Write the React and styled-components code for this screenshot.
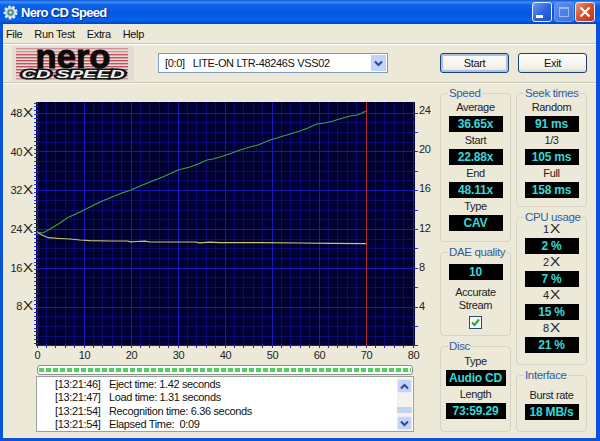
import React from 'react';
import styled, { createGlobalStyle } from 'styled-components';

const GlobalStyle = createGlobalStyle`
    html, body { margin: 0; padding: 0; background: #0054e3; }
    body { font-family: "Liberation Sans", Arial, sans-serif; font-size: 11px; letter-spacing: -.35px; color: #111; }
`;

const Window = styled.div`
    width: 600px;
    height: 441px;
    overflow: hidden;
    display: flex;
    flex-direction: column;
    background: #0a53d8;
`;

const TitleBar = styled.div`
    height: 24px;
    flex: none;
    display: flex;
    align-items: center;
    padding: 0 5px 0 3px;
    background: linear-gradient(#0a58d8 0, #3d8cf5 2px, #0d62e8 5px, #0057e4 14px, #0a63ee 20px, #0045c4 24px);
`;

const AppIcon = styled.svg`
    width: 15px;
    height: 15px;
    flex: none;
`;

const TitleText = styled.div`
    flex: 1;
    margin-left: 3px;
    font: bold 13px "Liberation Sans", sans-serif;
    letter-spacing: -.7px;
    color: #fff;
    text-shadow: 1px 1px 1px #0a2a8a;
`;

const CaptionButton = styled.div`
    width: 20px;
    height: 20px;
    margin-left: 1.5px;
    box-sizing: border-box;
    border: 1px solid ${props => props.$faded ? '#6d95e8' : '#e8eeff'};
    border-radius: 3px;
    display: flex;
    align-items: center;
    justify-content: center;
    background: ${props => props.$close
        ? 'linear-gradient(135deg, #ec9a7c, #d9512b 45%, #c23a14)'
        : props.$faded
            ? 'linear-gradient(135deg, #5f8ff0, #3a6fe0)'
            : 'linear-gradient(135deg, #6f9cf5, #2a62e0 55%, #1f50c8)'};
`;

const MinBar = styled.div`
    width: 7px;
    height: 3px;
    margin: 9px 6px 0 0;
    background: #fff;
`;

const MaxBox = styled.div`
    width: 10px;
    height: 10px;
    box-sizing: border-box;
    border: 1px solid #9ab8f2;
    border-top-width: 2px;
`;

const Content = styled.div`
    flex: 1;
    margin: 0 4px 3px 3px;
    background: #ece9d8;
    display: flex;
    flex-direction: column;
    min-height: 0;
`;

const MenuBar = styled.div`
    height: 19px;
    flex: none;
    display: flex;
    gap: 12px;
    align-items: center;
    padding-left: 3px;
    border-bottom: 1px solid #c9c6b6;
    box-shadow: 0 1px 0 #fff;
`;

const Toolbar = styled.div`
    height: 38px;
    flex: none;
    display: flex;
    align-items: center;
    border-bottom: 1px solid #c9c6b6;
    box-shadow: 0 1px 0 #fbfaf4;
`;

const LogoFrame = styled.svg`
    width: 122px;
    height: 35px;
    margin-left: 9px;
    flex: none;
    letter-spacing: 0;
    font-family: "Liberation Sans", sans-serif;
`;

const Combo = styled.div`
    width: 230px;
    height: 20px;
    margin-left: 24px;
    box-sizing: border-box;
    border: 1px solid #7f9db9;
    background: #fff;
    display: flex;
    align-items: center;
    padding-left: 6px;
    white-space: pre;
`;

const ComboText = styled.div`
    flex: 1;
`;

const ComboArrow = styled.div`
    width: 15px;
    height: 16px;
    margin-right: 1px;
    display: flex;
    align-items: center;
    justify-content: center;
    background: #c3d3f8;
`;

const Button = styled.div`
    width: 69px;
    height: 20px;
    box-sizing: border-box;
    margin-left: ${props => props.$gap}px;
    border: 1px solid #1f3f6f;
    border-radius: 3px;
    display: flex;
    align-items: center;
    justify-content: center;
    background: linear-gradient(#fdfdfa, #f2f0e6 80%, #dcd8c8);
    box-shadow: ${props => props.$primary ? 'inset 0 0 0 2px #a9c0ea' : 'none'};
`;

const Body = styled.div`
    flex: 1;
    display: flex;
    min-height: 0;
`;

const LeftColumn = styled.div`
    width: 437px;
    flex: none;
    padding-top: 18px;
`;

const ChartRow = styled.div`
    display: flex;
    height: 247px;
`;

const AxisLeft = styled.div`
    width: 30px;
    flex: none;
    padding-top: 5px;
    text-align: right;
    color: #222;
`;

const AxisRight = styled.div`
    flex: 1;
    padding: 2px 0 0 1px;
    color: #222;
`;

const AxisRow = styled.div`
    height: ${props => props.$pitch}px;
    line-height: 14px;
`;

const Times = styled.span`
    display: inline-block;
    width: 10px;
    margin-left: 1px;
    text-align: center;
    font: 400 13px/13px "Open Sans", sans-serif;
    transform: scaleX(1.3);
`;

const AxisBottom = styled.div`
    display: flex;
    margin-left: 11px;
    height: 15px;
    line-height: 15px;
    color: #222;
`;

const AxisTick = styled.div`
    width: 47px;
    text-align: center;
`;

const Progress = styled.div`
    width: 376px;
    height: 10px;
    margin: 2px 0 1px 34px;
    box-sizing: border-box;
    border: 1px solid #8a8f86;
    border-radius: 3px;
    background: #fff;
    padding: 2px 1px;
    overflow: hidden;
`;

const Chunks = styled.div`
    height: 100%;
    background: repeating-linear-gradient(90deg, #4fd35f 0, #4fd35f 5px, #fff 5px, #fff 7px);
`;

const LogBox = styled.div`
    width: 378px;
    height: 56px;
    margin-left: 33px;
    box-sizing: border-box;
    border: 1px solid #9a9f98;
    background: #fff;
    display: flex;
`;

const LogLines = styled.div`
    flex: 1;
    padding: 1px 0 0 18px;
`;

const LogLine = styled.div`
    display: flex;
    height: 13.4px;
    line-height: 13.4px;
    white-space: pre;
`;

const LogTime = styled.span`
    width: 54px;
    flex: none;
`;

const ScrollBar = styled.div`
    width: 15px;
    margin-right: 1px;
    padding: 2px 0 1px;
    flex: none;
    display: flex;
    flex-direction: column;
    background: #f4f2ea;
`;

const ScrollButton = styled.div`
    height: 14px;
    box-sizing: border-box;
    border: 1px solid #e4ecfd;
    border-radius: 2px;
    background: #c3d3f8;
    display: flex;
    align-items: center;
    justify-content: center;
`;

const ScrollTrack = styled.div`
    flex: 1;
    display: flex;
    flex-direction: column;
    justify-content: flex-end;
    padding-bottom: 3px;
`;

const ScrollThumb = styled.div`
    height: 6px;
    background: #c3d3f8;
`;

const SidePanel = styled.div`
    display: flex;
    gap: 5px;
    padding-top: 10px;
`;

const SideColumn = styled.div`
    width: 71px;
    display: flex;
    flex-direction: column;
    gap: 10px;
`;

const Group = styled.div`
    position: relative;
    height: ${props => props.$height}px;
    box-sizing: border-box;
    padding-top: ${props => props.$pad || 5}px;
    border: 1px solid #d6d3c2;
    border-radius: 4px;
    display: flex;
    flex-direction: column;
    align-items: center;
`;

const Legend = styled.div`
    position: absolute;
    top: -6px;
    left: 7px;
    padding: 0 1px;
    font-size: 11.5px;
    line-height: 11px;
    background: #ece9d8;
    color: #2f5ba6;
    white-space: nowrap;
`;

const StatLabel = styled.div`
    height: 17px;
    line-height: 17px;
    text-align: center;
    color: #222;
`;

const StatValue = styled.div`
    width: ${props => props.$wide ? 60 : 54}px;
    height: 16px;
    background: #000;
    color: #35d8d8;
    font: bold 12px/16px "Liberation Sans", sans-serif;
    letter-spacing: -.2px;
    text-align: center;
    white-space: nowrap;
`;

const StreamLabel = styled.div`
    margin-top: 6px;
    line-height: 12.5px;
    text-align: center;
    color: #222;
`;

const Check = styled.div`
    width: 13px;
    height: 13px;
    margin-top: 5px;
    box-sizing: border-box;
    border: 1px solid #1c5180;
    background: #f6f6ee;
    display: flex;
    align-items: center;
    justify-content: center;
`;

const MenuItems = ['File', 'Run Test', 'Extra', 'Help'];
const LeftLabels = [48, 40, 32, 24, 16, 8];
const RightLabels = [24, 20, 16, 12, 8, 4];
const BottomLabels = [0, 10, 20, 30, 40, 50, 60, 70, 80];

const LogRows = [
    ['[13:21:46]', 'Eject time: 1.42 seconds'],
    ['[13:21:47]', 'Load time: 1.31 seconds'],
    ['[13:21:54]', 'Recognition time: 6.36 seconds'],
    ['[13:21:54]', 'Elapsed Time:  0:09'],
];

const PLOT = { left: 36, right: 415, top: 102, bottom: 346 };

const range = (start, end, step) => {
    const out = [];
    for (let v = start; v <= end + 0.01; v += step) out.push(v);
    return out;
};

const GREEN = '37,232 43,233 50,229 60,223 67,218 80,212 90,207 100,202 112,197 122,193 131,190 140,186 145,184 155,180 165,176 178,170 190,167 198,164 207,160 213,159 220,157 232,153 240,150 250,147 258,145 270,140 280,137 290,134 300,131 308,128 317,124 325,123 333,121 343,118 350,116 357,115 362,113 366,111';
const YELLOW = '37,232 42,235 48,237.7 60,238.5 70,239 80,240 90,240.7 110,241 127,241 131,241.8 136,241.5 145,241.2 150,242 180,242 195,242 200,242.8 210,242.2 220,242.6 260,242.6 300,243 330,243.4 366,243.6';

function Logo() {
    return (
        <LogoFrame viewBox="0 0 122 35">
            <rect width="122" height="35" fill="#e6dcd6" />
            {range(2, 33, 3).map(y =>
                <rect key={y} x="4" y={y} width="112" height="1.4" fill={y < 8 || y > 27 ? '#d58f96' : '#c4505f'} />)}
            <text x="61" y="22" textAnchor="middle" fontSize="34" fontWeight="900" fill="#0b0b0b" stroke="#0b0b0b" strokeWidth="1" textLength="75" lengthAdjust="spacingAndGlyphs">nero</text>
            <text x="61" y="32" textAnchor="middle" fontSize="10" fontWeight="900" fontStyle="italic" fill="#eee" stroke="#111" strokeWidth="3" paintOrder="stroke" textLength="103" lengthAdjust="spacingAndGlyphs">CD SPEED</text>
        </LogoFrame>
    );
}

function Plot() {
    return (
        <svg width="385" height="247" viewBox="33 101 385 247" style={{ flex: 'none' }} shapeRendering="crispEdges">
            <rect x={PLOT.left} y={PLOT.top} width={PLOT.right - PLOT.left} height={PLOT.bottom - PLOT.top} fill="#000030" />
            {range(37, 413, 9.4).map(x =>
                <line key={x} x1={x} x2={x} y1={PLOT.top} y2={PLOT.bottom} stroke="#0a0a70" />)}
            {range(113, 346, 9.7).map(y =>
                <line key={y} x1={PLOT.left} x2={PLOT.right} y1={y} y2={y} stroke="#0a0a70" />)}
            {range(37, 413, 47).map(x =>
                <line key={x} x1={x} x2={x} y1={PLOT.top} y2={PLOT.bottom} stroke="#1818b8" />)}
            {range(113, 346, 38.8).map(y =>
                <line key={y} x1={PLOT.left} x2={PLOT.right} y1={y} y2={y} stroke="#1818b8" />)}
            {range(103, 346, 3.88).map(y =>
                <line key={y} x1={34} x2={37} y1={y} y2={y} stroke="#2a2ad0" />)}
            {range(113, 346, 19.4).map(y =>
                <line key={y} x1={PLOT.right} x2={418} y1={y} y2={y} stroke="#2a2ad0" />)}
            {range(37, 413, 9.4).map(x =>
                <line key={x} x1={x} x2={x} y1={PLOT.bottom} y2={348} stroke="#2a2ad0" />)}
            <line x1={366.5} x2={366.5} y1={PLOT.top} y2={PLOT.bottom} stroke="#b52a2a" />
            <polyline points={YELLOW} fill="none" stroke="#c9c46a" strokeWidth="1.2" shapeRendering="auto" />
            <polyline points={GREEN} fill="none" stroke="#35a83f" strokeWidth="1.1" shapeRendering="auto" />
        </svg>
    );
}

function Chevron({ up, color = '#2a4a8f' }) {
    return (
        <svg width="9" height="7" viewBox="0 0 9 7">
            <path d={up ? 'M1 5.5 L4.5 2 L8 5.5' : 'M1 1.5 L4.5 5 L8 1.5'} fill="none" stroke={color} strokeWidth="2" />
        </svg>
    );
}

function Stat({ label, value, wide }) {
    return (
        <>
            <StatLabel>{label}</StatLabel>
            <StatValue $wide={wide}>{value}</StatValue>
        </>
    );
}

export default function App() {
    return (
        <Window>
            <GlobalStyle />
            <TitleBar>
                <AppIcon viewBox="0 0 16 16">
                    <circle cx="8" cy="8" r="6" fill="#c8d4d0" stroke="#e4ece8" strokeWidth="3" strokeDasharray="2.5 1.7" />
                    <circle cx="8" cy="8" r="3.4" fill="#4d8f8a" />
                    <circle cx="8" cy="8" r="1.3" fill="#dff" />
                </AppIcon>
                <TitleText>Nero CD Speed</TitleText>
                <CaptionButton><MinBar /></CaptionButton>
                <CaptionButton $faded><MaxBox /></CaptionButton>
                <CaptionButton $close>
                    <svg width="12" height="12" viewBox="0 0 12 12">
                        <path d="M1.5 1.5 L10.5 10.5 M10.5 1.5 L1.5 10.5" stroke="#fff" strokeWidth="2.2" />
                    </svg>
                </CaptionButton>
            </TitleBar>
            <Content>
                <MenuBar>
                    {MenuItems.map(item => <span key={item}>{item}</span>)}
                </MenuBar>
                <Toolbar>
                    <Logo />
                    <Combo>
                        <ComboText>[0:0]   LITE-ON LTR-48246S VSS02</ComboText>
                        <ComboArrow><Chevron /></ComboArrow>
                    </Combo>
                    <Button $gap={52} $primary>Start</Button>
                    <Button $gap={9}>Exit</Button>
                </Toolbar>
                <Body>
                    <LeftColumn>
                        <ChartRow>
                            <AxisLeft>
                                {LeftLabels.map(l => <AxisRow key={l} $pitch={38.7}>{l}<Times>X</Times></AxisRow>)}
                            </AxisLeft>
                            <Plot />
                            <AxisRight>
                                {RightLabels.map(l => <AxisRow key={l} $pitch={39.2}>{l}</AxisRow>)}
                            </AxisRight>
                        </ChartRow>
                        <AxisBottom>
                            {BottomLabels.map(l => <AxisTick key={l}>{l}</AxisTick>)}
                        </AxisBottom>
                        <Progress><Chunks /></Progress>
                        <LogBox>
                            <LogLines>
                                {LogRows.map(([time, text]) => (
                                    <LogLine key={text}>
                                        <LogTime>{time}</LogTime>
                                        <span>{text}</span>
                                    </LogLine>
                                ))}
                            </LogLines>
                            <ScrollBar>
                                <ScrollButton><Chevron up /></ScrollButton>
                                <ScrollTrack><ScrollThumb /></ScrollTrack>
                                <ScrollButton><Chevron /></ScrollButton>
                            </ScrollBar>
                        </LogBox>
                    </LeftColumn>
                    <SidePanel>
                        <SideColumn>
                            <Group $height={149}>
                                <Legend>Speed</Legend>
                                <Stat label="Average" value="36.65x" />
                                <Stat label="Start" value="22.88x" />
                                <Stat label="End" value="48.11x" />
                                <Stat label="Type" value="CAV" />
                            </Group>
                            <Group $height={84} $pad={11}>
                                <Legend>DAE quality</Legend>
                                <StatValue>10</StatValue>
                                <StreamLabel>Accurate<br />Stream</StreamLabel>
                                <Check>
                                    <svg width="9" height="9" viewBox="0 0 9 9">
                                        <path d="M1 4.5 L3.5 7 L8 1.5" fill="none" stroke="#2f9e44" strokeWidth="2" />
                                    </svg>
                                </Check>
                            </Group>
                            <Group $height={86} $pad={6}>
                                <Legend>Disc</Legend>
                                <Stat label="Type" value="Audio CD" wide />
                                <Stat label="Length" value="73:59.29" wide />
                            </Group>
                        </SideColumn>
                        <SideColumn>
                            <Group $height={114}>
                                <Legend>Seek times</Legend>
                                <Stat label="Random" value="91 ms" />
                                <Stat label="1/3" value="105 ms" />
                                <Stat label="Full" value="158 ms" />
                            </Group>
                            <Group $height={148} $pad={3}>
                                <Legend>CPU usage</Legend>
                                <Stat label={<>1<Times>X</Times></>} value="2 %" />
                                <Stat label={<>2<Times>X</Times></>} value="7 %" />
                                <Stat label={<>4<Times>X</Times></>} value="15 %" />
                                <Stat label={<>8<Times>X</Times></>} value="21 %" />
                            </Group>
                            <Group $height={57} $pad={11}>
                                <Legend>Interface</Legend>
                                <Stat label="Burst rate" value="18 MB/s" />
                            </Group>
                        </SideColumn>
                    </SidePanel>
                </Body>
            </Content>
        </Window>
    );
}
